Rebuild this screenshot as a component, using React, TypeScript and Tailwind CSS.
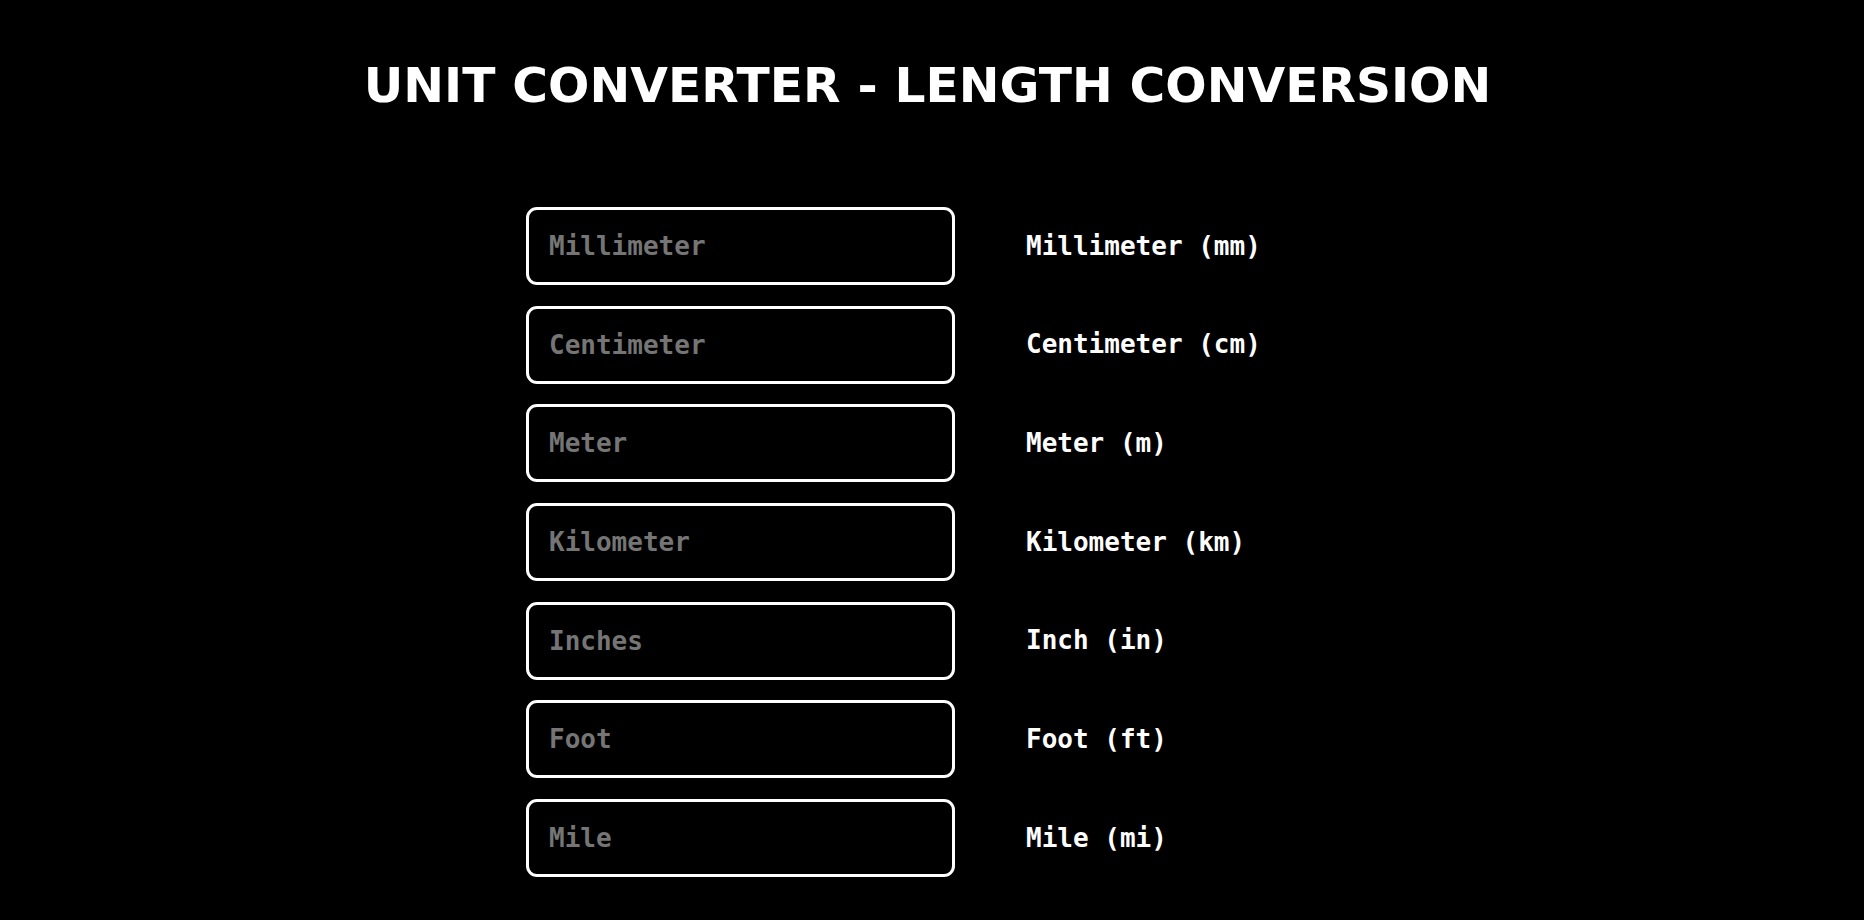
import React from "react";

const units = [
  { ph: "Millimeter", label: "Millimeter (mm)" },
  { ph: "Centimeter", label: "Centimeter (cm)" },
  { ph: "Meter", label: "Meter (m)" },
  { ph: "Kilometer", label: "Kilometer (km)" },
  { ph: "Inches", label: "Inch (in)" },
  { ph: "Foot", label: "Foot (ft)" },
  { ph: "Mile", label: "Mile (mi)" },
];

export default function App() {
  return (
    <div className="min-h-[920px] w-full bg-black text-white overflow-hidden">
      <h1
        className="pt-[57px] pr-[9px] text-center text-[48.7px] font-bold leading-[57px] text-white"
        style={{ fontFamily: '"DejaVu Sans", Verdana, sans-serif' }}
      >
        UNIT CONVERTER - LENGTH CONVERSION
      </h1>
      <div className="mx-auto mt-[93px] flex w-[812px] flex-col gap-[20.7px]">
        {units.map((u) => (
          <div key={u.ph} className="flex items-center">
            <input
              type="text"
              placeholder={u.ph}
              className="h-[78px] w-[429px] rounded-[11px] border-[3px] border-white bg-black px-[20px] text-[26px] font-bold text-white outline-none placeholder:text-[#757575]"
              style={{ fontFamily: '"DejaVu Sans Mono", monospace' }}
            />
            <span
              className="ml-[71px] text-[26px] font-bold text-white"
              style={{ fontFamily: '"DejaVu Sans Mono", monospace' }}
            >
              {u.label}
            </span>
          </div>
        ))}
      </div>
    </div>
  );
}
